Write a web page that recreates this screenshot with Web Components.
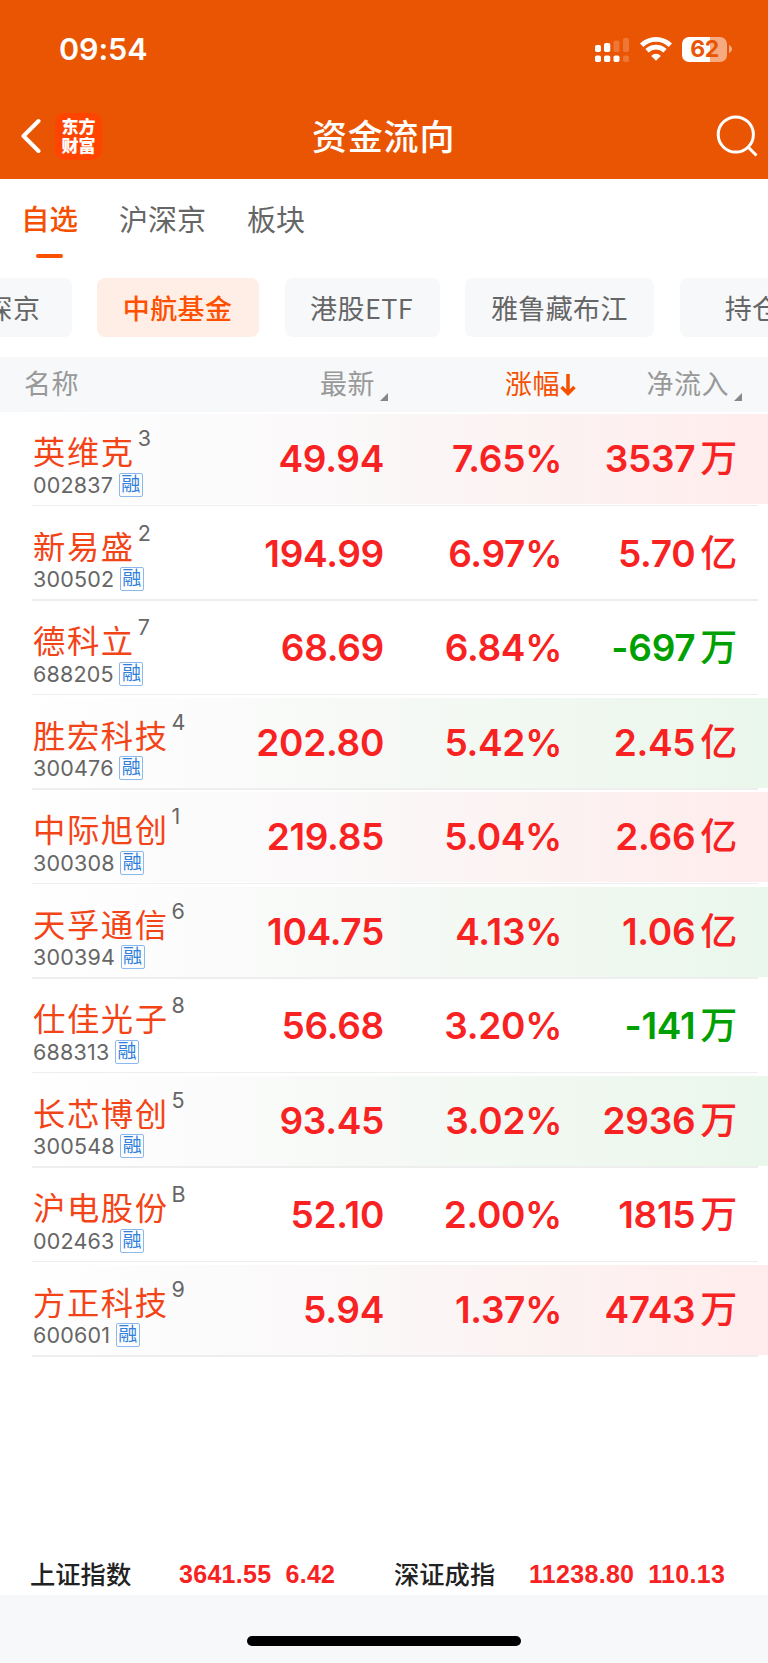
<!DOCTYPE html>
<html lang="zh-CN">
  <head>
    <meta charset="UTF-8" />
    <meta name="viewport" content="width=device-width, initial-scale=1" />
    <title>资金流向</title>
    <style>
      body {
        margin: 0;
        background: #fff;
        font-family: Inter, "Noto Sans CJK SC", sans-serif;
      }
    </style>
  </head>
  <body>
    <fund-flow-page></fund-flow-page>

    <script>
      // Every element clones its template into an open shadow root.
      class BaseElement extends HTMLElement {
        constructor() {
          super();
          const template = document.createElement("template");
          template.innerHTML = this.constructor.html;
          this.attachShadow({ mode: "open" }).appendChild(
            template.content.cloneNode(true)
          );
        }
      }

      class StatusBar extends BaseElement {
        static html = `
          <style>
            :host {
              display: flex;
              align-items: center;
              height: 98px;
              padding: 0 36px 0 59px;
              color: #fff;
            }
            .time {
              flex: 1;
              font-size: 30.5px;
              font-weight: 600;
              line-height: 98px;
              letter-spacing: -0.1px;
            }
            svg { display: block; }
            .wifi { margin: 0 10px 0 11px; }
            .battery {
              display: grid;
              place-items: center;
              width: 45px;
              height: 25px;
              border-radius: 7px;
              background: linear-gradient(90deg, #fff 28px, #f6aa80 28px);
              color: #ea5504;
              font-size: 23px;
              font-weight: 700;
              line-height: 25px;
              letter-spacing: -0.5px;
            }
            .nub { margin-left: 2px; }
          </style>
          <span class="time">09:54</span>
          <svg width="34" height="25" viewBox="0 0 34 25" fill="#fff">
            <rect x="0" y="8" width="6" height="7" rx="1.8" />
            <rect x="9" y="6" width="6.3" height="9" rx="1.8" />
            <rect x="18.5" y="3.5" width="6" height="11.5" rx="1.8" opacity=".2" />
            <rect x="28" y="1" width="6" height="14" rx="1.8" opacity=".2" />
            <rect x="0" y="18.5" width="6" height="6.5" rx="1.8" />
            <rect x="9" y="18.5" width="6.3" height="6.5" rx="1.8" />
            <rect x="18.5" y="18.5" width="6" height="6.5" rx="1.8" />
            <rect x="28" y="18.5" width="6" height="6.5" rx="1.8" opacity=".2" />
          </svg>
          <svg class="wifi" width="32" height="24" viewBox="0 0 32 24" fill="none" stroke="#fff" stroke-width="4.8">
            <path d="M1.7 8.300a20.3 20.3 0 0 1 28.6 0" />
            <path d="M7 13.800a12.8 12.8 0 0 1 18 0" />
            <path d="M16 23.800 11.200 18.900a6.700 6.700 0 0 1 9.600 0z" fill="#fff" stroke="none" />
          </svg>
          <div class="battery">62</div>
          <svg class="nub" width="3" height="8" viewBox="0 0 3 8"><path d="M0 0c4 1.500 4 6.500 0 8z" fill="#f6aa80" /></svg>
        `;
      }
      customElements.define("status-bar", StatusBar);

      class NavBar extends BaseElement {
        static html = `
          <style>
            :host {
              display: flex;
              align-items: center;
              height: 76px;
              padding: 0 10px 0 21px;
              color: #fff;
            }
            .logo {
              box-sizing: border-box;
              width: 47px;
              height: 47px;
              margin: 0 210px 0 14px;
              padding-top: 3px;
              border-radius: 10px;
              background: #ff4400;
              font: 900 17px/19.5px "Noto Sans CJK SC", sans-serif;
              text-align: center;
            }
            h1 {
              flex: 1;
              margin: 0;
              font: 500 35px/73px "Noto Sans CJK SC", sans-serif;
              height: 76px;
              letter-spacing: 0.8px;
            }
            svg { display: block; fill: none; stroke: #fff; }
          </style>
          <svg width="20" height="36" viewBox="0 0 20 36" stroke-width="4" stroke-linecap="round" stroke-linejoin="round">
            <path d="M17.500 3 2.500 18l15 15" />
          </svg>
          <div class="logo">东方<br />财富</div>
          <h1><slot></slot></h1>
          <svg width="42" height="42" viewBox="0 0 42 42" stroke-width="3">
            <circle cx="19.800" cy="19.500" r="17.600" />
            <path d="m32 32 8.500 8.500" />
          </svg>
        `;
      }
      customElements.define("nav-bar", NavBar);

      class TabItem extends BaseElement {
        static html = `
          <style>
            :host {
              display: flex;
              flex-direction: column;
              align-items: center;
              color: #666;
              font: 400 29px/78px "Noto Sans CJK SC", sans-serif;
            }
            :host([active]) { color: #f55000; font-weight: 500; font-size: 28.5px; }
            i { width: 27px; height: 4px; margin-top: -3px; border-radius: 2px; }
            :host([active]) i { background: #ff5000; }
          </style>
          <slot></slot><i></i>
        `;
      }
      customElements.define("tab-item", TabItem);

      class FilterChip extends BaseElement {
        static html = `
          <style>
            :host {
              flex: none;
              box-sizing: border-box;
              height: 59px;
              padding: 0 25.5px;
              border-radius: 8px;
              background: #f7f8fa;
              color: #666;
              font: 400 27px/59px "Noto Sans CJK SC", sans-serif;
              letter-spacing: 0.4px;
              white-space: nowrap;
            }
            :host([active]) {
              background: #ffeee6;
              color: #ff5000;
              font-weight: 500;
            }
          </style>
          <slot></slot>
        `;
      }
      customElements.define("filter-chip", FilterChip);

      class SortHeader extends BaseElement {
        static html = `
          <style>
            :host {
              display: flex;
              justify-content: flex-end;
              align-items: center;
              color: #999;
              font: 400 27px/52px "Noto Sans CJK SC", sans-serif;
              letter-spacing: 0.5px;
            }
            :host([sorted]) { color: #f55000; }
            span { height: 55px; }
            svg { display: none; }
            :host([sortable]) .corner { display: block; margin: 25px 0 0 5px; }
            :host([sorted]) .arrow { display: block; }
          </style>
          <span><slot></slot></span>
          <svg class="corner" width="8" height="8"><path d="M8 0v8H0z" fill="#888" /></svg>
          <svg class="arrow" width="16" height="22" viewBox="0 0 16 22" fill="none" stroke="#f55000" stroke-width="3.500">
            <path d="M8 0v19M1.500 13 8 19.500 14.500 13" />
          </svg>
        `;
      }
      customElements.define("sort-header", SortHeader);

      class StockRow extends BaseElement {
        static html = `
          <style>
            :host {
              display: block;
              box-sizing: border-box;
              height: 94.5px;
              padding-top: 2px;
            }
            .row {
              display: grid;
              grid-template-columns: 206px 178px 178px 175px;
              height: 90px;
              color: #f82222;
              font-size: 37px;
              font-weight: 600;
              line-height: 89.5px;
              letter-spacing: -0.3px;
              text-align: right;
              white-space: nowrap;
            }
            :host([flash="up"]) .row {
              background: linear-gradient(90deg, #fff 10px, #faf8f8 45%, #ffecec);
            }
            :host([flash="down"]) .row {
              background: linear-gradient(90deg, #fff 10px, #f7f9f7 45%, #eaf7eb);
            }
            .stock {
              padding: 14px 0 0 33px;
              font-weight: 400;
              text-align: left;
            }
            .name, .meta { display: flex; }
            .name {
              gap: 3px;
              height: 44.5px;
              color: #f34418;
              font-size: 32.3px;
              line-height: 49.5px;
              letter-spacing: 1.6px;
            }
            .rank { color: #666; font-size: 21.5px; line-height: 20px; letter-spacing: 0; }
            .meta {
              align-items: center;
              gap: 5.5px;
              height: 24px;
              color: #666;
              font-size: 21.5px;
              line-height: 24px;
              letter-spacing: 0.2px;
            }
            .tag {
              box-sizing: border-box;
              width: 24px;
              height: 24px;
              border: 1.5px solid #8bb9ed;
              border-radius: 2px;
              color: #2f7fdc;
              font-size: 19px;
              line-height: 21px;
              letter-spacing: 0;
              text-align: center;
            }
            .net { display: flex; justify-content: flex-end; gap: 5px; }
            .net.fall { color: #00a000; }
            .unit { font-weight: 500; }
            hr {
              height: 1.5px;
              margin: 0.5px 10px 0 32px;
              border: 0;
              background: #eee;
            }
          </style>
          <div class="row">
            <div class="stock">
              <div class="name"><span class="title"></span><span class="rank"></span></div>
              <div class="meta"><span class="code"></span><span class="tag">融</span></div>
            </div>
            <div class="price"></div>
            <div class="change"></div>
            <div class="net"><span class="amount"></span><span class="unit"></span></div>
          </div>
          <hr />
        `;

        set stock([title, rank, code, price, change, amount, unit, flash]) {
          const cells = { title, rank, code, price, change, amount, unit };
          for (const [name, text] of Object.entries(cells)) {
            this.shadowRoot.querySelector("." + name).textContent = text;
          }
          this.shadowRoot
            .querySelector(".net")
            .classList.toggle("fall", amount.startsWith("-"));
          if (flash) this.setAttribute("flash", flash);
        }
      }
      customElements.define("stock-row", StockRow);

      class IndexQuote extends BaseElement {
        static html = `
          <style>
            :host {
              display: flex;
              color: #f82222;
              font: 700 25px/44px "Liberation Sans", Arial, sans-serif;
              letter-spacing: 0.3px;
              white-space: nowrap;
            }
            .label {
              width: var(--label-width, 149px);
              color: #222;
              font: 500 25.3px/42px "Noto Sans CJK SC", sans-serif;
              letter-spacing: 0;
            }
            .delta { margin-left: 14px; }
          </style>
          <span class="label"><slot></slot></span>
          <span><slot name="value"></slot></span>
          <span class="delta"><slot name="delta"></slot></span>
        `;
      }
      customElements.define("index-quote", IndexQuote);

      const STOCKS = [
        ["英维克", "3", "002837", "49.94", "7.65%", "3537", "万", "up"],
        ["新易盛", "2", "300502", "194.99", "6.97%", "5.70", "亿"],
        ["德科立", "7", "688205", "68.69", "6.84%", "-697", "万"],
        ["胜宏科技", "4", "300476", "202.80", "5.42%", "2.45", "亿", "down"],
        ["中际旭创", "1", "300308", "219.85", "5.04%", "2.66", "亿", "up"],
        ["天孚通信", "6", "300394", "104.75", "4.13%", "1.06", "亿", "down"],
        ["仕佳光子", "8", "688313", "56.68", "3.20%", "-141", "万"],
        ["长芯博创", "5", "300548", "93.45", "3.02%", "2936", "万", "down"],
        ["沪电股份", "B", "002463", "52.10", "2.00%", "1815", "万"],
        ["方正科技", "9", "600601", "5.94", "1.37%", "4743", "万", "up"],
      ];

      class FundFlowPage extends BaseElement {
        static html = `
          <style>
            :host {
              display: flex;
              flex-direction: column;
              width: 768px;
              height: 1663px;
              overflow: hidden;
            }
            header { height: 179px; background: #ea5504; }
            .tabs { display: flex; gap: 41px; height: 99px; padding-left: 21px; }
            .chips { display: flex; gap: 25.3px; height: 79px; margin-left: -40px; }
            .chips :first-child { width: 112px; }
            .chips :nth-child(2) { width: 162px; }
            .chips :nth-child(3) { width: 155.5px; }
            .chips :nth-child(4) { width: 189px; }
            .chips :last-child { width: 146px; padding-left: 45px; }
            .columns {
              display: grid;
              grid-template-columns: 206px 182px 188px 166px;
              height: 55px;
              background: #f6f8fa;
            }
            .columns :first-child { justify-content: flex-start; padding-left: 24px; }
            .list { flex: 1; }
            .indices { display: flex; height: 43px; padding-left: 30px; }
            .indices > * { flex: none; width: 364px; }
            .indices :last-child { --label-width: 135px; }
            .home {
              display: grid;
              justify-content: center;
              box-sizing: border-box;
              height: 68px;
              padding-top: 41px;
              background: #f6f8fa;
            }
            .home i { width: 274px; height: 10px; border-radius: 5px; background: #000; }
          </style>
          <header>
            <status-bar></status-bar>
            <nav-bar>资金流向</nav-bar>
          </header>
          <nav class="tabs">
            <tab-item active>自选</tab-item>
            <tab-item>沪深京</tab-item>
            <tab-item>板块</tab-item>
          </nav>
          <div class="chips">
            <filter-chip>深京</filter-chip>
            <filter-chip active>中航基金</filter-chip>
            <filter-chip>港股ETF</filter-chip>
            <filter-chip>雅鲁藏布江</filter-chip>
            <filter-chip>持仓</filter-chip>
          </div>
          <div class="columns">
            <sort-header>名称</sort-header>
            <sort-header sortable>最新</sort-header>
            <sort-header sorted>涨幅</sort-header>
            <sort-header sortable>净流入</sort-header>
          </div>
          <main class="list"></main>
          <footer>
            <div class="indices">
              <index-quote>上证指数<span slot="value">3641.55</span><span slot="delta">6.42</span></index-quote>
              <index-quote>深证成指<span slot="value">11238.80</span><span slot="delta">110.13</span></index-quote>
            </div>
            <div class="home"><i></i></div>
          </footer>
        `;

        connectedCallback() {
          const list = this.shadowRoot.querySelector(".list");
          for (const stock of STOCKS) {
            const row = document.createElement("stock-row");
            row.stock = stock;
            list.appendChild(row);
          }
        }
      }
      customElements.define("fund-flow-page", FundFlowPage);
    </script>
  </body>
</html>
